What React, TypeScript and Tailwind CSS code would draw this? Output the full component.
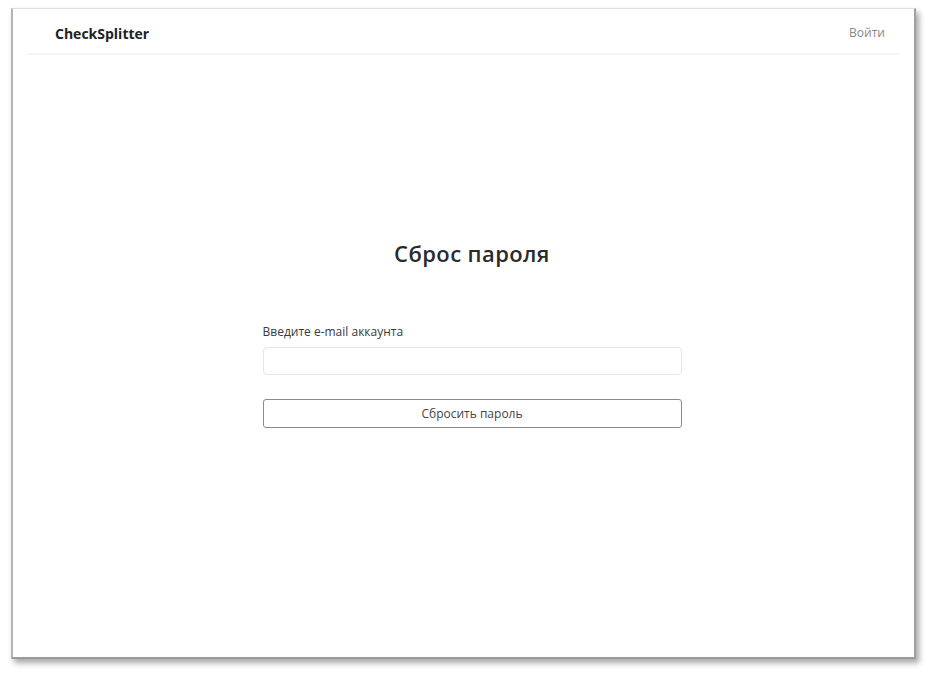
import React from 'react';

const font = { fontFamily: '"Open Sans", "Noto Sans", sans-serif' };

const App = () => {
  return (
    <div className="w-[926px] h-[673px] bg-white pl-[11px] pt-[8px]" style={font}>
      <div className="w-[905px] h-[651px] bg-white border-l-2 border-r-2 border-b-2 border-t border-l-[#b5b5b5] border-r-[#a0a0a0] border-b-[#9a9a9a] border-t-[#e0e0e0] shadow-[3px_4px_6px_rgba(0,0,0,0.35)] flex flex-col">
        {/* header */}
        <header className="mx-[14px] h-[46px] border-b-2 border-[#f5f5f5] flex items-center justify-between pt-[4px] pl-[28px] pr-[15px]">
          <span className="text-[14px] font-bold text-[#222]">CheckSplitter</span>
          <span className="text-[12px] text-[#888]">Войти</span>
        </header>

        <main className="flex flex-col items-center pl-[17px]">
          <h1 className="mt-[182px] text-[22px] font-semibold text-[#2a2a2a] tracking-[0.4px]">
            Сброс пароля
          </h1>
          <div className="w-[419px] mt-[53px] flex flex-col">
            <label className="text-[12px] text-[#3a3a3a] mb-[6px]">Введите e-mail аккаунта</label>
            <input className="h-[28px] border border-[#e6e6e6] rounded-[4px] outline-none px-2 text-[12px]" />
            <button className="mt-[24px] h-[29px] border border-[#8a8a8a] rounded-[3px] text-[12px] text-[#444] bg-white">
              Сбросить пароль
            </button>
          </div>
        </main>
      </div>
    </div>
  );
};

export default App;
